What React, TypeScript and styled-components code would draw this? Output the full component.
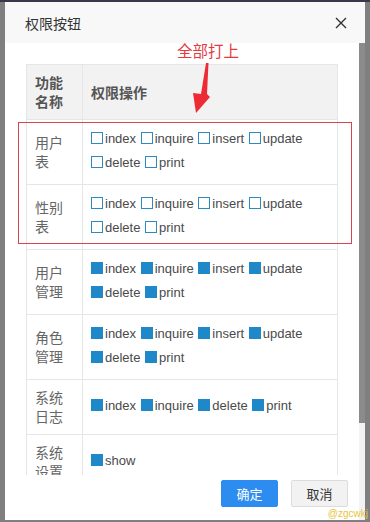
import React from "react";
import styled, { createGlobalStyle } from "styled-components";

const Global = createGlobalStyle`
  html, body { margin: 0; padding: 0; background: #7f7f7f; }
  body { font-family: "Liberation Sans", "Noto Sans CJK SC", sans-serif; }
`;

const Screen = styled.div`
  width: 370px;
  height: 522px;
  display: flex;
  flex-direction: column;
  background: #7f7f7f;
  overflow: hidden;
`;

const TopStrip = styled.div`
  height: 2px;
  background: #38384a;
  flex: none;
`;

const Dialog = styled.div`
  position: relative;
  margin-left: 5px;
  width: 360px;
  height: 518px;
  display: flex;
  flex-direction: column;
  background: #fff;
`;

const Header = styled.div`
  height: 41px;
  flex: none;
  display: flex;
  align-items: center;
  justify-content: space-between;
  padding: 0 18px 0 20px;
  background: #f8f8f8;
`;

const Title = styled.div`
  font-family: "Noto Sans CJK SC", sans-serif;
  font-size: 14px;
  color: #333;
`;

const Main = styled.div`
  flex: 1;
  display: flex;
  min-height: 0;
`;

const Content = styled.div`
  flex: 1;
  display: flex;
  flex-direction: column;
  min-width: 0;
`;

const Body = styled.div`
  height: 432px;
  flex: none;
  overflow: hidden;
  padding: 21px 21px 0;
  box-sizing: border-box;
`;

const Scrollbar = styled.div`
  width: 6px;
  flex: none;
  display: flex;
  flex-direction: column;
  background: #f3f3f3;
`;

const Thumb = styled.div`
  height: 380px;
  background: #8b8b8b;
`;

const Table = styled.table`
  width: 312px;
  border-collapse: collapse;
  table-layout: fixed;
`;

const Th = styled.th<{ $w?: number }>`
  ${(p) => (p.$w ? `width: ${p.$w}px;` : "")}
  background: #f2f2f2;
  border: 1px solid #e6e6e6;
  padding: 8px;
  text-align: left;
  vertical-align: middle;
  font-family: "Noto Sans CJK SC", sans-serif;
  font-size: 14px;
  font-weight: bold;
  line-height: 19px;
  color: #555;
`;

const NameCell = styled.td`
  border: 1px solid #e6e6e6;
  padding: 8px;
  vertical-align: middle;
  font-family: "Noto Sans CJK SC", sans-serif;
  font-size: 14px;
  line-height: 19px;
  color: #666;
`;

const OpsCell = styled.td`
  border: 1px solid #e6e6e6;
  padding: 6px 8px 10px;
  vertical-align: middle;
`;

const OpsList = styled.div`
  display: flex;
  flex-wrap: wrap;
  column-gap: 4.6px;
`;

const Op = styled.label`
  height: 24px;
  display: flex;
  align-items: center;
  gap: 2px;
  font-family: "Liberation Sans", sans-serif;
  font-size: 13px;
  color: #4a4a4a;
`;

const Box = styled.span<{ $on: boolean }>`
  width: 12px;
  height: 12px;
  box-sizing: border-box;
  flex: none;
  border: 1px solid ${(p) => (p.$on ? "#1e88c8" : "#2b8ac0")};
  background: ${(p) => (p.$on ? "#1e88c8" : "#fff")};
`;

const Footer = styled.div`
  flex: 1;
  display: flex;
  justify-content: flex-end;
  align-items: flex-start;
  gap: 13px;
  padding: 5px 11px 0 0;
`;

const Button = styled.button<{ $primary?: boolean }>`
  width: 57px;
  height: 27px;
  border-radius: 2px;
  font-family: "Noto Sans CJK SC", sans-serif;
  font-size: 13px;
  padding: 0;
  cursor: pointer;
  border: 1px solid ${(p) => (p.$primary ? "#2d8cf0" : "#dcdcdc")};
  background: ${(p) => (p.$primary ? "#2d8cf0" : "#f2f2f2")};
  color: ${(p) => (p.$primary ? "#fff" : "#333")};
`;

const Note = styled.div`
  position: absolute;
  left: 172px;
  top: 38px;
  font-family: "Noto Sans CJK SC", sans-serif;
  font-size: 15.5px;
  color: #e4393f;
  line-height: 20px;
`;

const Highlight = styled.div`
  position: absolute;
  left: 13px;
  top: 120px;
  width: 334px;
  height: 122px;
  box-sizing: border-box;
  border: 1px solid #d9434e;
  pointer-events: none;
`;

const ArrowSvg = styled.svg`
  position: absolute;
  left: 0;
  top: 0;
  pointer-events: none;
`;

const Watermark = styled.div`
  position: absolute;
  right: -3px;
  bottom: 0px;
  font-family: "Liberation Sans", sans-serif;
  font-size: 10px;
  color: #e8c53c;
  line-height: 12px;
`;

type Row = { name: string[]; ops: string[]; on: boolean };

const rows: Row[] = [
  { name: ["用户", "表"], ops: ["index", "inquire", "insert", "update", "delete", "print"], on: false },
  { name: ["性别", "表"], ops: ["index", "inquire", "insert", "update", "delete", "print"], on: false },
  { name: ["用户", "管理"], ops: ["index", "inquire", "insert", "update", "delete", "print"], on: true },
  { name: ["角色", "管理"], ops: ["index", "inquire", "insert", "update", "delete", "print"], on: true },
  { name: ["系统", "日志"], ops: ["index", "inquire", "delete", "print"], on: true },
  { name: ["系统", "设置"], ops: ["show"], on: true },
];

export default function App() {
  return (
    <>
      <Global />
      <Screen>
        <TopStrip />
        <Dialog>
          <Header>
            <Title>权限按钮</Title>
            <svg width="12" height="12" viewBox="0 0 12 12">
              <path d="M1 1 L11 11 M11 1 L1 11" stroke="#333" strokeWidth="1.4" />
            </svg>
          </Header>
          <Main>
            <Content>
              <Body>
                <Table>
                  <thead>
                    <tr>
                      <Th $w={39}>
                        功能
                        <br />
                        名称
                      </Th>
                      <Th>权限操作</Th>
                    </tr>
                  </thead>
                  <tbody>
                    {rows.map((r, i) => (
                      <tr key={i}>
                        <NameCell>
                          {r.name[0]}
                          <br />
                          {r.name[1]}
                        </NameCell>
                        <OpsCell>
                          <OpsList>
                            {r.ops.map((o) => (
                              <Op key={o}>
                                <Box $on={r.on} />
                                {o}
                              </Op>
                            ))}
                          </OpsList>
                        </OpsCell>
                      </tr>
                    ))}
                  </tbody>
                </Table>
              </Body>
              <Footer>
                <Button $primary>确定</Button>
                <Button>取消</Button>
              </Footer>
            </Content>
            <Scrollbar>
              <Thumb />
            </Scrollbar>
          </Main>
          <Note>全部打上</Note>
          <Highlight />
          <ArrowSvg width="360" height="120" viewBox="0 0 360 120">
            <polygon
              points="201,61 203.5,61 202,92 205,95 191,111 188,91 196,92"
              fill="#ee2b34"
            />
          </ArrowSvg>
          <Watermark>@zgcwkj</Watermark>
        </Dialog>
      </Screen>
    </>
  );
}
